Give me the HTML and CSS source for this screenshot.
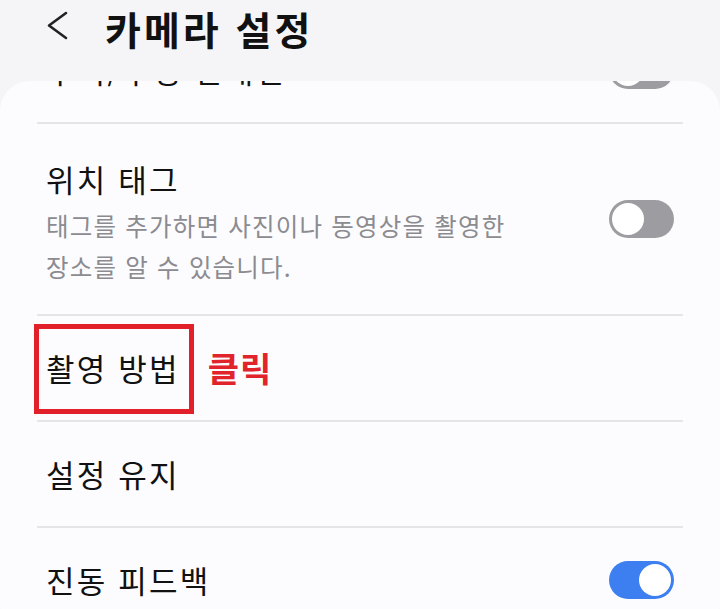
FILE: index.html
```html
<!DOCTYPE html>
<html lang="ko">
<head>
<meta charset="utf-8">
<title>카메라 설정</title>
<link rel="stylesheet" href="styles.css">
</head>
<body>
<header class="appbar">
  <button class="back" aria-label="뒤로">
    <svg width="22" height="30" viewBox="0 0 22 30"><path d="M19 2 L2 14.5 L19 27" fill="none" stroke="#222" stroke-width="2.6" stroke-linecap="round" stroke-linejoin="round"/></svg>
  </button>
  <h1 class="title">카메라 설정</h1>
</header>
<main class="card">
  <div class="list">
    <div class="row">
      <span class="label">수직/수평 안내선</span>
      <span class="toggle"></span>
    </div>
    <div class="row row-tall">
      <div class="text">
        <div class="label">위치 태그</div>
        <div class="desc">태그를 추가하면 사진이나 동영상을 촬영한<br>장소를 알 수 있습니다.</div>
      </div>
      <span class="toggle"></span>
    </div>
    <div class="row row-start">
      <span class="label marked">촬영 방법<span class="mark-box"></span></span>
      <span class="click-note">클릭</span>
    </div>
    <div class="row row-start">
      <span class="label">설정 유지</span>
    </div>
    <div class="row">
      <span class="label">진동 피드백</span>
      <span class="toggle on"></span>
    </div>
  </div>
</main>
</body>
</html>
```
FILE: styles.css
```css
html, body {
  margin: 0;
  padding: 0;
}
body {
  width: 720px;
  height: 609px;
  overflow: hidden;
  background: #f5f5f7;
  font-family: "Noto Sans CJK KR", "Noto Sans", sans-serif;
  color: #111;
}
.appbar {
  height: 81px;
  display: flex;
  align-items: flex-start;
  padding-left: 47px;
  box-sizing: border-box;
}
.back {
  border: 0;
  background: none;
  padding: 0;
  margin-top: 11px;
  width: 22px;
  height: 30px;
  display: block;
}
.back svg { display: block; }
.title {
  margin: 7px 0 0 36px;
  font-size: 39px;
  font-weight: 700;
  line-height: 42px;
  letter-spacing: 3px;
  color: #111;
}
.card {
  background: #fcfcfe;
  border-radius: 30px;
  overflow: hidden;
  padding: 0 37px;
}
.list {
  margin-top: -63px;
}
.row {
  height: 106px;
  box-sizing: border-box;
  border-bottom: 2px solid #e5e5e8;
  padding: 0 9px;
  display: flex;
  align-items: center;
  justify-content: space-between;
}
.row-start {
  justify-content: flex-start;
}
.row-tall {
  height: 192px;
}
.row-tall .text {
  margin-top: 11px;
}
.label {
  font-size: 31px;
  line-height: 34px;
  font-weight: 400;
  letter-spacing: 2.2px;
  color: #111;
  white-space: nowrap;
}
.desc {
  margin-top: 9px;
  font-size: 24.5px;
  line-height: 41px;
  letter-spacing: 1.2px;
  color: #8b8b90;
}
.toggle {
  width: 65px;
  height: 38px;
  border-radius: 19px;
  background: #9d9da1;
  position: relative;
  flex: none;
}
.toggle::after {
  content: "";
  position: absolute;
  top: 3px;
  left: 3px;
  width: 32px;
  height: 32px;
  border-radius: 50%;
  background: #fff;
}
.toggle.on {
  background: #3d7ef1;
}
.toggle.on::after {
  left: auto;
  right: 3px;
}
.marked {
  position: relative;
}
.mark-box {
  position: absolute;
  left: -12px;
  top: -27px;
  width: 160px;
  height: 90px;
  box-sizing: border-box;
  border: 5px solid #e1202a;
}
.click-note {
  margin-left: 28px;
  font-size: 34px;
  line-height: 40px;
  font-weight: 700;
  letter-spacing: 1px;
  color: #e1232b;
}
```
